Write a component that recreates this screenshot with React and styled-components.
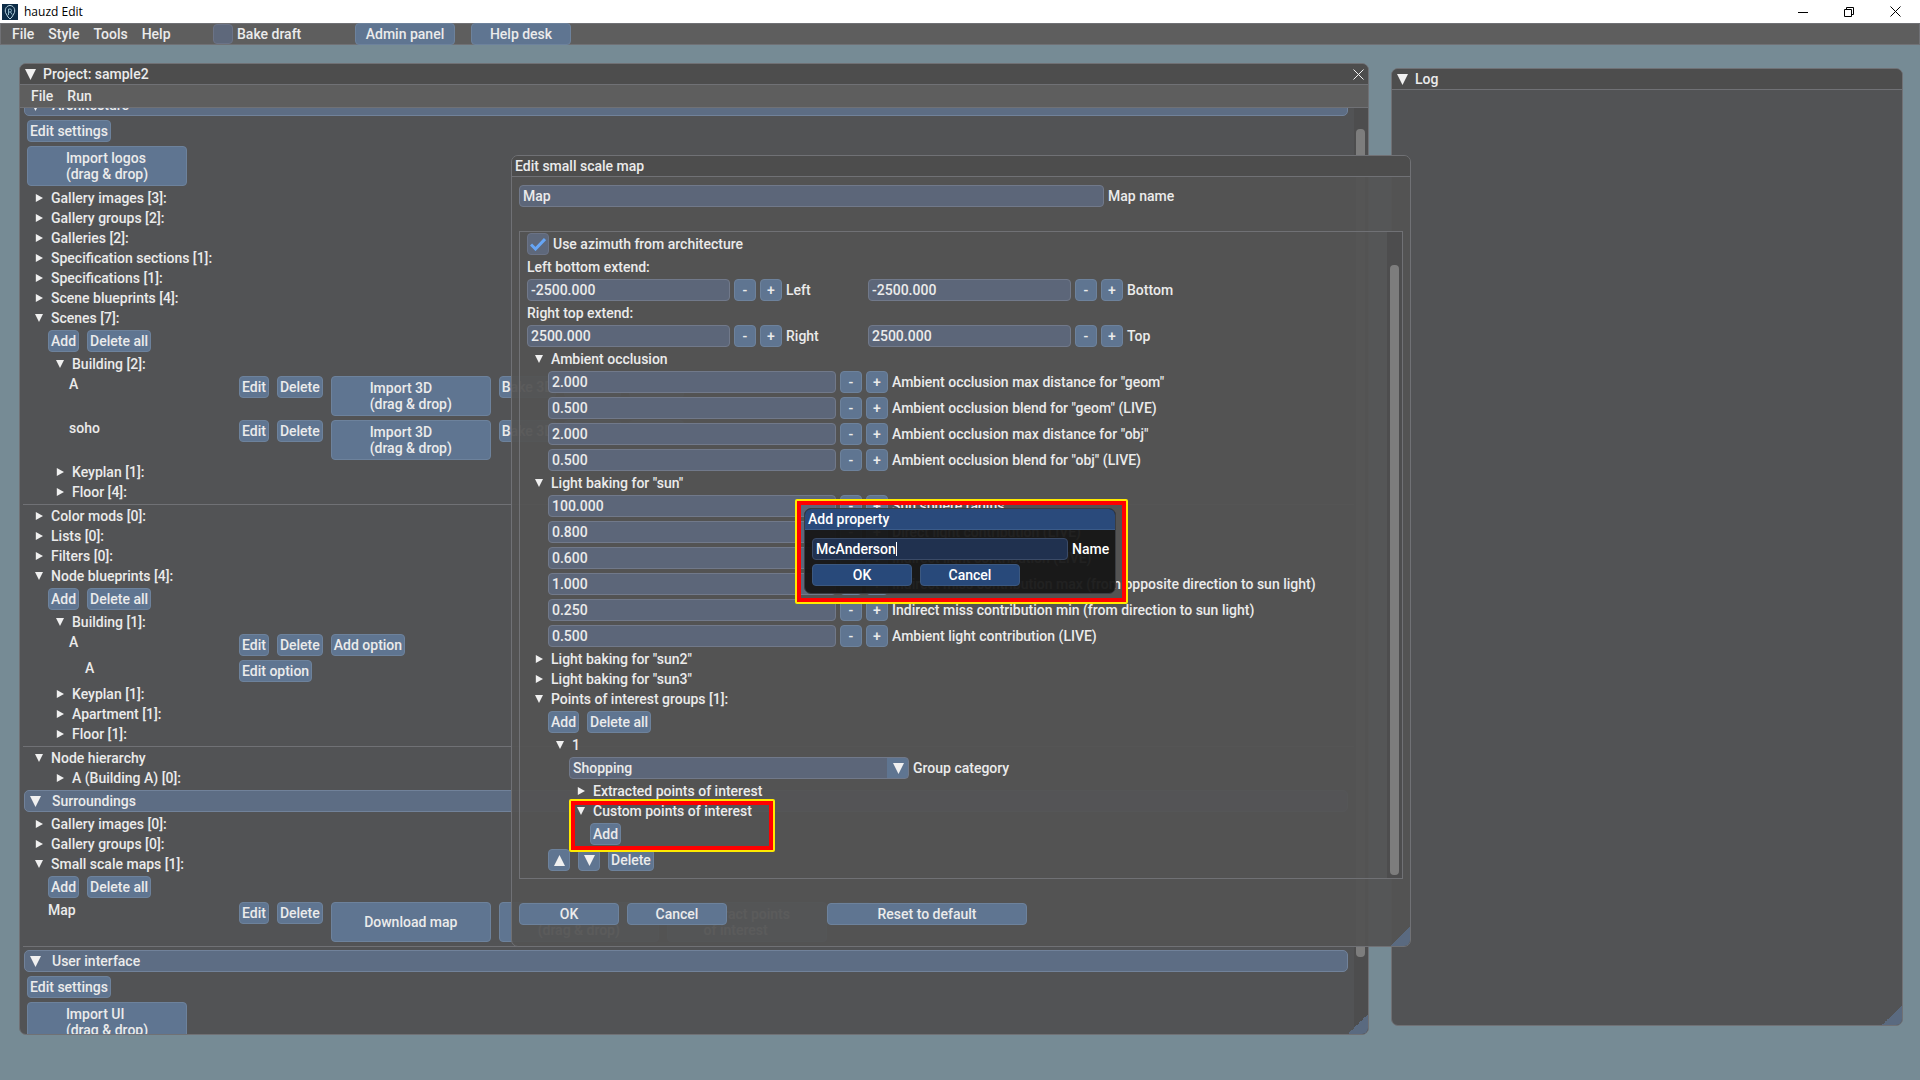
import React from "react";
import styled, { createGlobalStyle, css } from "styled-components";

const c = {
  desk: "#768b95",
  window: "#525355",
  title: "#4d4d4d",
  menu: "#5e5e5e",
  border: "#707175",
  text: "#ebebeb",
  button: "#5f7591",
  header: "#5d6d84",
  field: "#5c6679",
  fieldBorder: "#71798a",
  track: "#4d4d4e",
  thumb: "#7d7d7d",
  grip: "#5a6a80",
};

const Global = createGlobalStyle`
  *, *::before, *::after { box-sizing: border-box; }
  body { margin: 0; background: ${c.desk}; }
  body, button, input, select {
    font-family: Roboto, "Liberation Sans", sans-serif;
    font-size: 14px;
    font-weight: 500;
    line-height: 16px;
    color: ${c.text};
  }
  button { margin: 0; }
`;

/* ---------- native frame ---------- */
const Screen = styled.div`
  display: flex;
  flex-direction: column;
  height: 100vh;
  overflow: hidden;
`;
const NativeBar = styled.header`
  display: flex;
  align-items: center;
  height: 23px;
  flex: none;
  padding: 0 2px;
  background: #fff;
  color: #000;
  font-family: "Open Sans", sans-serif;
  font-size: 12px;
  font-weight: 400;
`;
const NativeTitle = styled.span`
  flex: 1;
  margin-left: 6px;
`;
const NativeButton = styled.button`
  width: 46px;
  height: 20px;
  padding: 0;
  border: 0;
  background: none;
  display: grid;
  place-items: center;
`;

/* ---------- basic controls ---------- */
const Button = styled.button`
  display: inline-flex;
  align-items: center;
  justify-content: center;
  flex: none;
  height: ${(p) => (p.$tall ? 40 : 22)}px;
  ${(p) => p.$width && css`width: ${p.$width}px;`}
  padding: 0 ${(p) => (p.$square ? 0 : 2)}px;
  border: 1px solid ${(p) => (p.$dark ? "#3c587f" : "#6d829c")};
  border-radius: 4px;
  background: ${(p) => (p.$dark ? "#28497a" : c.button)};
  color: ${(p) => (p.$dark ? "#fff" : c.text)};
  text-align: left;
  white-space: pre;
`;
const Field = styled.input`
  width: ${(p) => p.$width}px;
  height: 22px;
  flex: none;
  padding: 0 3px;
  border: 1px solid ${(p) => (p.$dark ? "#3a4a66" : c.fieldBorder)};
  border-radius: 4px;
  background: ${(p) => (p.$dark ? "#20314f" : c.field)};
  color: ${(p) => (p.$dark ? "#fff" : c.text)};
  outline: 0;
`;
const Line = styled.div`
  display: flex;
  align-items: center;
  gap: ${(p) => p.$gap || 4}px;
`;
const TextLine = styled.div`
  height: 16px;
`;
const CheckWrap = styled.label`
  display: flex;
  align-items: center;
  gap: 4px;
  height: 22px;
  position: relative;
`;
const Check = styled.input`
  appearance: none;
  width: ${(p) => p.$size}px;
  height: ${(p) => p.$size}px;
  margin: 0;
  border: 1px solid #6b7386;
  border-radius: 4px;
  background: #5e687b;
`;
const Tick = styled.svg`
  position: absolute;
  left: 3px;
  top: 4px;
  pointer-events: none;
`;

/* ---------- application bars ---------- */
const MenuBar = styled.nav`
  display: flex;
  align-items: center;
  flex: none;
  height: 22px;
  background: ${c.menu};
  border: 1px solid ${c.border};
`;
const MenuGroup = styled.div`
  display: flex;
  gap: 14px;
  width: ${(p) => p.$width};
  padding-left: 11px;
`;
const MenuItem = styled.button`
  padding: 0;
  border: 0;
  background: none;
`;
const BakeSlot = styled.div`
  width: 142px;
`;

/* ---------- desktop and windows ---------- */
const Desk = styled.main`
  position: relative;
  flex: 1;
  min-height: 0;
  display: grid;
  grid-template-columns: 1350fr 512fr;
  gap: 22px;
  padding: 18px 17px 45px 19px;
  background: ${c.desk};
`;
const Window = styled.section`
  position: relative;
  display: flex;
  flex-direction: column;
  min-width: 0;
  min-height: 0;
  overflow: hidden;
  border: 1px solid ${c.border};
  border-radius: 7px;
  background: ${c.window};
`;
const LogWindow = styled(Window)`
  margin: 5px 0 9px;
`;
const TitleBar = styled.div`
  display: flex;
  align-items: center;
  flex: none;
  gap: 7px;
  height: 21px;
  padding: 0 4px 0 3px;
  background: ${c.title};
  border-bottom: 1px solid ${c.border};
  button:first-child { margin-left: 2px; }
  button:last-child:not(:first-child) { margin-left: auto; }
`;
const IconButton = styled.button`
  display: grid;
  place-items: center;
  padding: 0;
  border: 0;
  background: none;
`;
const WindowMenu = styled.nav`
  display: flex;
  align-items: center;
  flex: none;
  height: 23px;
  background: ${c.menu};
  border-bottom: 1px solid ${c.border};
`;
const Body = styled.div`
  display: flex;
  flex: 1;
  min-height: 0;
  overflow: hidden;
`;
const List = styled.div`
  display: flex;
  flex-direction: column;
  gap: 4px;
  flex: 1;
  min-width: 0;
  overflow: hidden;
`;
const ProjectList = styled(List)`
  padding: 0 9px 0 7px;
  & > :first-child { margin-top: -14px; }
`;
const Track = styled.div`
  display: flex;
  flex: none;
  width: ${(p) => p.$width}px;
  padding: ${(p) => p.$pad};
  background: ${c.track};
`;
const Thumb = styled.div`
  flex: 1;
  border-radius: 4px;
  background: ${c.thumb};
`;
const Grip = styled.span`
  position: absolute;
  right: 0;
  bottom: 0;
  width: 20px;
  height: 20px;
  background: linear-gradient(135deg, transparent 50%, ${c.grip} 50%);
`;
const Section = styled.button`
  display: flex;
  align-items: center;
  gap: 11px;
  flex: none;
  height: 22px;
  margin: 0 -3px;
  padding: 0 5px;
  border: 1px solid #71829a;
  border-radius: 5px;
  background: ${c.header};
`;
const Rule = styled.hr`
  flex: none;
  width: auto;
  height: 1px;
  margin: 0 -9px -1px -4px;
  border: 0;
  background: ${c.border};
`;
const Node = styled.button`
  display: flex;
  align-items: center;
  flex: none;
  height: 16px;
  padding: 0;
  border: 0;
  background: none;
  svg { margin: 0 8px; }
`;
const Indent = styled.div`
  display: flex;
  flex-direction: column;
  gap: 4px;
  flex: none;
  position: relative;
  padding-left: ${(p) => (p.$flat ? 0 : 21)}px;
`;
const ItemRow = styled.div`
  display: flex;
  align-items: flex-start;
  gap: 8px;
`;
const ItemName = styled.span`
  flex: none;
  width: ${(p) => 204 - 21 * p.$depth}px;
  padding-left: ${(p) => (p.$sub ? 16 : 0)}px;
`;

/* ---------- dialogs ---------- */
const Overlay = styled.div`
  position: absolute;
  inset: -22px 0 0;
  display: grid;
  place-items: center;
  padding: ${(p) => p.$pad};
  pointer-events: none;
  & > * { pointer-events: auto; }
`;
const MapWindow = styled(Window)`
  width: 900px;
  background: rgba(83, 83, 83, 0.95);
`;
const DialogBody = styled.div`
  display: flex;
  flex-direction: column;
  gap: 24px;
  padding: 8px 7px 21px;
`;
const Settings = styled.div`
  display: flex;
  border: 1px solid ${c.border};
`;
const SettingsList = styled(List)`
  padding: 1px 7px 7px;
`;
const Pair = styled.div`
  display: grid;
  grid-template-columns: 341px 1fr;
`;
const ActionRow = styled.div`
  display: flex;
  gap: 8px;
  button:nth-child(3) { margin-left: 92px; }
`;
const SelectWrap = styled.div`
  position: relative;
  width: 340px;
  height: 22px;
`;
const Select = styled.select`
  appearance: none;
  width: 100%;
  height: 22px;
  padding: 0 3px;
  border: 1px solid ${c.fieldBorder};
  border-radius: 4px;
  background: linear-gradient(to left, ${c.button} 21px, ${c.field} 21px);
`;
const SelectArrow = styled.span`
  position: absolute;
  right: 0;
  top: 0;
  display: grid;
  place-items: center;
  width: 22px;
  height: 22px;
  pointer-events: none;
`;
const mark = css`
  position: absolute;
  border: 2px solid #ffea00;
  border-radius: 2px;
  box-shadow: inset 0 0 0 4px #ff0000;
  pointer-events: none;
`;
const GroupMark = styled.span`
  ${mark}
  left: 0;
  top: -4px;
  width: 206px;
  height: 53px;
`;
const DialogMark = styled.span`
  ${mark}
  inset: -9px -12px -10px -9px;
`;
const PropertyHolder = styled.div`
  position: relative;
  width: 312px;
`;
const PropertyWindow = styled(Window)`
  border-color: #3a3d42;
  background: rgba(22, 22, 22, 0.95);
  color: #fff;
`;
const PropertyTitle = styled(TitleBar)`
  background: #2a4a7b;
  border-color: #3a5a88;
`;
const PropertyBody = styled.div`
  display: flex;
  flex-direction: column;
  gap: 4px;
  padding: 8px 7px 7px;
`;
const NameBox = styled.span`
  position: relative;
  display: flex;
`;
const Caret = styled.span`
  position: absolute;
  left: 84px;
  top: 4px;
  width: 1px;
  height: 14px;
  background: #fff;
`;

/* ---------- drawings ---------- */
const Arrow = ({ dir = "down", big }) => {
  const shape = { down: "0,0 10,0 5,10", right: "1,0 10,5 1,10", up: "5,0 10,10 0,10" }[dir];
  const size = big ? 11 : 8;
  return (
    <svg width={size} height={size} viewBox="0 0 10 10" aria-hidden="true">
      <polygon points={shape} fill="#f0f0f0" />
    </svg>
  );
};
const Cross = ({ size = 11, color = "#f0f0f0" }) => (
  <svg width={size} height={size} viewBox="0 0 11 11" stroke={color} aria-hidden="true">
    <path d="M.5 .5 10.5 10.5M10.5 .5 .5 10.5" />
  </svg>
);
const Logo = () => (
  <svg width="16" height="16" viewBox="0 0 16 16" fill="none" aria-hidden="true">
    <rect width="16" height="16" fill="#0d2c47" />
    <path d="M6 13 8 15l2-2 2.5-4.500C13.500 4.500 11 1.500 8 1.500S2.500 4.500 3.500 8.500L6 13" stroke="#b9d3df" />
    <path d="M6.500 11V5h2.200q1.500 1.500 0 3H6.500M8.500 8l1.500 2.500" stroke="#8fb6c8" />
  </svg>
);

/* ---------- composed parts ---------- */
const TreeNode = ({ open, children }) => (
  <Node type="button" aria-expanded={!!open}>
    <Arrow dir={open ? "down" : "right"} />
    {children}
  </Node>
);
const SectionHeader = ({ children }) => (
  <Section type="button" aria-expanded="true">
    <Arrow big />
    {children}
  </Section>
);
const AddDelete = () => (
  <Line $gap={8}>
    <Button>Add</Button>
    <Button>Delete all</Button>
  </Line>
);
const Item = ({ name, depth, children }) => (
  <ItemRow>
    <ItemName $depth={depth}>{name}</ItemName>
    <Button>Edit</Button>
    <Button>Delete</Button>
    {children}
  </ItemRow>
);
const Scene = ({ name }) => (
  <Item name={name} depth={2}>
    <Button $tall $width={160}><span>{"Import 3D\n(drag & drop)"}</span></Button>
    <Button>Bake 3D</Button>
    <Button>View 3D</Button>
    <Button>With 3D</Button>
  </Item>
);
const NumberRow = ({ id, value, label, width = 288 }) => (
  <Line>
    <Field id={id} $width={width} defaultValue={value} />
    <Button $square $width={22} aria-label={`Decrease ${label}`}>-</Button>
    <Button $square $width={22} aria-label={`Increase ${label}`}>+</Button>
    <label htmlFor={id}>{label}</label>
  </Line>
);

const occlusion = [
  ["2.000", 'Ambient occlusion max distance for "geom"'],
  ["0.500", 'Ambient occlusion blend for "geom" (LIVE)'],
  ["2.000", 'Ambient occlusion max distance for "obj"'],
  ["0.500", 'Ambient occlusion blend for "obj" (LIVE)'],
];
const sun = [
  ["100.000", "Sun sphere radius"],
  ["0.800", "Direct light contribution (LIVE)"],
  ["0.600", "Indirect light contribution (LIVE)"],
  ["1.000", "Indirect miss contribution max (from opposite direction to sun light)"],
  ["0.250", "Indirect miss contribution min (from direction to sun light)"],
  ["0.500", "Ambient light contribution (LIVE)"],
];

const Project = () => (
  <Window>
    <TitleBar>
      <IconButton aria-label="Collapse project"><Arrow big /></IconButton>
      <span>Project: sample2</span>
      <IconButton aria-label="Close project"><Cross /></IconButton>
    </TitleBar>
    <WindowMenu>
      <MenuGroup $width="auto">
        <MenuItem>File</MenuItem>
        <MenuItem>Run</MenuItem>
      </MenuGroup>
    </WindowMenu>
    <Body>
      <ProjectList>
        <SectionHeader>Architecture</SectionHeader>
        <Line><Button>Edit settings</Button></Line>
        <Line><Button $tall $width={160}><span>{"Import logos\n(drag & drop)"}</span></Button></Line>
        <TreeNode>Gallery images [3]:</TreeNode>
        <TreeNode>Gallery groups [2]:</TreeNode>
        <TreeNode>Galleries [2]:</TreeNode>
        <TreeNode>Specification sections [1]:</TreeNode>
        <TreeNode>Specifications [1]:</TreeNode>
        <TreeNode>Scene blueprints [4]:</TreeNode>
        <TreeNode open>Scenes [7]:</TreeNode>
        <Indent>
          <AddDelete />
          <TreeNode open>Building [2]:</TreeNode>
          <Indent>
            <Scene name="A" />
            <Scene name="soho" />
          </Indent>
          <TreeNode>Keyplan [1]:</TreeNode>
          <TreeNode>Floor [4]:</TreeNode>
        </Indent>
        <Rule />
        <TreeNode>Color mods [0]:</TreeNode>
        <TreeNode>Lists [0]:</TreeNode>
        <TreeNode>Filters [0]:</TreeNode>
        <TreeNode open>Node blueprints [4]:</TreeNode>
        <Indent>
          <AddDelete />
          <TreeNode open>Building [1]:</TreeNode>
          <Indent>
            <Item name="A" depth={2}><Button>Add option</Button></Item>
            <ItemRow>
              <ItemName $depth={2} $sub>A</ItemName>
              <Button>Edit option</Button>
            </ItemRow>
          </Indent>
          <TreeNode>Keyplan [1]:</TreeNode>
          <TreeNode>Apartment [1]:</TreeNode>
          <TreeNode>Floor [1]:</TreeNode>
        </Indent>
        <Rule />
        <TreeNode open>Node hierarchy</TreeNode>
        <Indent><TreeNode>A (Building A) [0]:</TreeNode></Indent>
        <SectionHeader>Surroundings</SectionHeader>
        <TreeNode>Gallery images [0]:</TreeNode>
        <TreeNode>Gallery groups [0]:</TreeNode>
        <TreeNode open>Small scale maps [1]:</TreeNode>
        <Indent>
          <AddDelete />
          <Item name="Map" depth={1}>
            <Button $tall $width={160}>Download map</Button>
            <Button $tall $width={160}><span>{"Import map\n(drag & drop)"}</span></Button>
            <Button $tall $width={160}><span>{"Extract points\nof interest"}</span></Button>
            <Button>Bake</Button>
          </Item>
        </Indent>
        <Rule />
        <SectionHeader>User interface</SectionHeader>
        <Line><Button>Edit settings</Button></Line>
        <Line><Button $tall $width={160}><span>{"Import UI\n(drag & drop)"}</span></Button></Line>
      </ProjectList>
      <Track $width={14} $pad="21px 3px 77px 2px"><Thumb /></Track>
    </Body>
    <Grip />
  </Window>
);

const MapEditor = () => (
  <MapWindow role="dialog" aria-label="Edit small scale map">
    <TitleBar>Edit small scale map</TitleBar>
    <DialogBody>
      <Line>
        <Field id="map-name" $width={585} defaultValue="Map" />
        <label htmlFor="map-name">Map name</label>
      </Line>
      <Settings>
        <SettingsList>
          <CheckWrap>
            <Check type="checkbox" $size={22} defaultChecked />
            <Tick width="16" height="14" viewBox="0 0 16 14" fill="none">
              <path d="M1 7.500 5.500 12 15 2" stroke="#66a5f5" strokeWidth="3" />
            </Tick>
            Use azimuth from architecture
          </CheckWrap>
          <TextLine>Left bottom extend:</TextLine>
          <Pair>
            <NumberRow id="left" width={203} value="-2500.000" label="Left" />
            <NumberRow id="bottom" width={203} value="-2500.000" label="Bottom" />
          </Pair>
          <TextLine>Right top extend:</TextLine>
          <Pair>
            <NumberRow id="right" width={203} value="2500.000" label="Right" />
            <NumberRow id="top" width={203} value="2500.000" label="Top" />
          </Pair>
          <TreeNode open>Ambient occlusion</TreeNode>
          <Indent>
            {occlusion.map(([value, label], i) => (
              <NumberRow key={label} id={`ao-${i}`} value={value} label={label} />
            ))}
          </Indent>
          <TreeNode open>Light baking for "sun"</TreeNode>
          <Indent>
            {sun.map(([value, label], i) => (
              <NumberRow key={label} id={`sun-${i}`} value={value} label={label} />
            ))}
          </Indent>
          <TreeNode>Light baking for "sun2"</TreeNode>
          <TreeNode>Light baking for "sun3"</TreeNode>
          <TreeNode open>Points of interest groups [1]:</TreeNode>
          <Indent>
            <AddDelete />
            <TreeNode open>1</TreeNode>
            <Indent>
              <Line>
                <SelectWrap>
                  <Select id="category" defaultValue="Shopping">
                    <option>Shopping</option>
                  </Select>
                  <SelectArrow><Arrow big /></SelectArrow>
                </SelectWrap>
                <label htmlFor="category">Group category</label>
              </Line>
              <TreeNode>Extracted points of interest</TreeNode>
              <Indent $flat>
                <TreeNode open>Custom points of interest</TreeNode>
                <Indent><Line><Button>Add</Button></Line></Indent>
                <GroupMark />
              </Indent>
            </Indent>
            <Line $gap={8}>
              <Button $square $width={22} aria-label="Move up"><Arrow dir="up" big /></Button>
              <Button $square $width={22} aria-label="Move down"><Arrow big /></Button>
              <Button>Delete</Button>
            </Line>
          </Indent>
        </SettingsList>
        <Track $width={15} $pad="33px 3px 3px"><Thumb /></Track>
      </Settings>
      <ActionRow>
        <Button $width={100}>OK</Button>
        <Button $width={100}>Cancel</Button>
        <Button $width={200}>Reset to default</Button>
      </ActionRow>
    </DialogBody>
    <Grip />
  </MapWindow>
);

const AddProperty = () => (
  <PropertyHolder>
    <PropertyWindow role="dialog" aria-label="Add property">
      <PropertyTitle>Add property</PropertyTitle>
      <PropertyBody>
        <Line>
          <NameBox>
            <Field id="property-name" $dark $width={256} defaultValue="McAnderson" />
            <Caret />
          </NameBox>
          <label htmlFor="property-name">Name</label>
        </Line>
        <Line $gap={8}>
          <Button $dark $width={100}>OK</Button>
          <Button $dark $width={100}>Cancel</Button>
        </Line>
      </PropertyBody>
    </PropertyWindow>
    <DialogMark />
  </PropertyHolder>
);

export default function App() {
  return (
    <Screen>
      <Global />
      <NativeBar>
        <Logo />
        <NativeTitle>hauzd Edit</NativeTitle>
        <NativeButton aria-label="Minimize">
          <svg width="10" height="10" viewBox="0 0 10 10"><path d="M0 5.500h10" stroke="#000" /></svg>
        </NativeButton>
        <NativeButton aria-label="Restore">
          <svg width="10" height="10" viewBox="0 0 10 10" fill="none" stroke="#000">
            <path d="M.5 2.500h7v7h-7zM2.500 2.500v-2h7v7h-2" />
          </svg>
        </NativeButton>
        <NativeButton aria-label="Close"><Cross size={11} color="#000" /></NativeButton>
      </NativeBar>
      <MenuBar>
        <MenuGroup $width="212px">
          <MenuItem>File</MenuItem>
          <MenuItem>Style</MenuItem>
          <MenuItem>Tools</MenuItem>
          <MenuItem>Help</MenuItem>
        </MenuGroup>
        <BakeSlot>
          <CheckWrap>
            <Check type="checkbox" $size={20} />
            Bake draft
          </CheckWrap>
        </BakeSlot>
        <Line $gap={16}>
          <Button $width={100}>Admin panel</Button>
          <Button $width={100}>Help desk</Button>
        </Line>
      </MenuBar>
      <Desk>
        <Project />
        <LogWindow>
          <TitleBar>
            <IconButton aria-label="Collapse log"><Arrow big /></IconButton>
            <span>Log</span>
          </TitleBar>
          <Grip />
        </LogWindow>
        <Overlay $pad="0 0 1px 2px"><MapEditor /></Overlay>
        <Overlay $pad="0 0 1px"><AddProperty /></Overlay>
      </Desk>
    </Screen>
  );
}
